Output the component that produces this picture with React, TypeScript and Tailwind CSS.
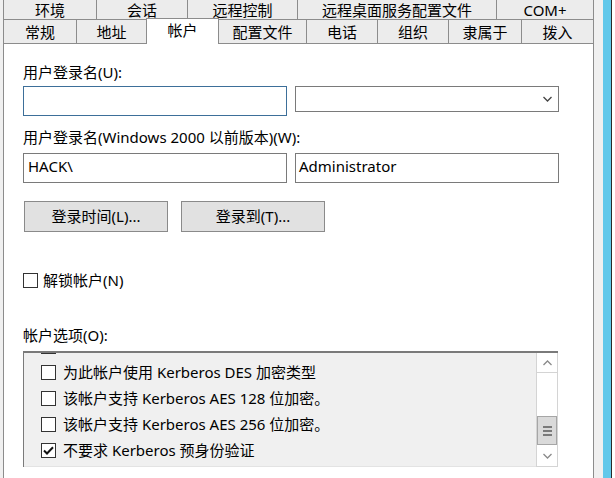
import React from 'react';

const topTabs = [
  { label: '环境', w: 93 },
  { label: '会话', w: 91 },
  { label: '远程控制', w: 110 },
  { label: '远程桌面服务配置文件', w: 199 },
  { label: 'COM+', w: 98 },
];

const bottomTabs = [
  { label: '常规', w: 73 },
  { label: '地址', w: 70 },
  { label: '帐户', w: 73, active: true },
  { label: '配置文件', w: 87 },
  { label: '电话', w: 71 },
  { label: '组织', w: 71 },
  { label: '隶属于', w: 73 },
  { label: '拨入', w: 73 },
];

// first row is scrolled mostly out of view, only its box edge shows
const options = [
  { label: '', checked: false },
  { label: '为此帐户使用 Kerberos DES 加密类型', checked: false },
  { label: '该帐户支持 Kerberos AES 128 位加密。', checked: false },
  { label: '该帐户支持 Kerberos AES 256 位加密。', checked: false },
  { label: '不要求 Kerberos 预身份验证', checked: true },
];

function CheckBox({ checked }: { checked?: boolean }) {
  return (
    <span className="flex h-[15px] w-[15px] shrink-0 items-center justify-center border border-[#333333] bg-white">
      {checked && (
        <svg width="11" height="9" viewBox="0 0 11 9">
          <path d="M1 4.5 L4 7.5 L10 1.2" fill="none" stroke="#111" strokeWidth="2" />
        </svg>
      )}
    </span>
  );
}

function Chevron({ up, color }: { up?: boolean; color: string }) {
  return (
    <svg width="9" height="6" viewBox="0 0 9 6">
      <path d={up ? 'M0.5 5 L4.5 1 L8.5 5' : 'M0.5 1 L4.5 5 L8.5 1'} fill="none" stroke={color} strokeWidth="1.3" />
    </svg>
  );
}

export default function App() {
  return (
    <div className="flex h-[478px] w-[615px] overflow-hidden bg-[#f0f0f0] font-['Noto_Sans','Noto_Sans_CJK_SC',sans-serif] text-[15px] text-black">
      <div className="ml-[3px] flex w-[591px] flex-col">
        {/* tab rows */}
        <div className="flex h-[20px] border-b border-[#8c8c8c]">
          {topTabs.map((t, i) => (
            <div
              key={t.label}
              style={{ width: t.w }}
              className={`flex items-center justify-center border-l border-[#8c8c8c] bg-[#ececec] pt-[2px] leading-none ${i === topTabs.length - 1 ? 'border-r' : ''}`}
            >
              {t.label}
            </div>
          ))}
        </div>
        <div className="flex h-[24px] items-end">
          {bottomTabs.map((t, i) =>
            t.active ? (
              <div
                key={t.label}
                style={{ width: t.w }}
                className="relative z-10 flex h-[26px] items-center justify-center border-x border-t border-[#8c8c8c] bg-white pb-[3px] leading-none"
              >
                {t.label}
              </div>
            ) : (
              <div
                key={t.label}
                style={{ width: t.w }}
                className={`flex h-[24px] items-center justify-center border-b border-l border-[#8c8c8c] bg-[#ececec] pt-[1px] leading-none ${i === bottomTabs.length - 1 ? 'border-r' : ''} ${bottomTabs[i - 1]?.active ? 'border-l-0' : ''}`}
              >
                {t.label}
              </div>
            )
          )}
        </div>

        {/* panel */}
        <div className="flex flex-1 flex-col border-x border-[#8c8c8c] bg-white pl-[19px] leading-[20px]">
          <div className="mt-[18px]">用户登录名(U):</div>
          <div className="mt-[4px] flex items-start gap-[8px]">
            <div className="h-[30px] w-[264px] border border-[#3d6f99] bg-white" />
            <div className="flex h-[26px] w-[264px] items-center justify-end border border-[#7a7a7a] bg-white pr-[6px]">
              <Chevron color="#444" />
            </div>
          </div>

          <div className="mt-[11px]">用户登录名(Windows 2000 以前版本)(W):</div>
          <div className="mt-[6px] flex gap-[8px]">
            <div className="flex h-[30px] w-[264px] items-center border border-[#7a7a7a] pb-[4px] pl-[4px]">HACK\</div>
            <div className="flex h-[30px] w-[264px] items-center border border-[#7a7a7a] pb-[4px] pl-[3px]">Administrator</div>
          </div>

          <div className="ml-[1px] mt-[18px] flex gap-[13px]">
            <button className="h-[31px] w-[144px] border border-[#8a8a8a] bg-[#e1e1e1] leading-none">登录时间(L)...</button>
            <button className="h-[31px] w-[144px] border border-[#8a8a8a] bg-[#e1e1e1] leading-none">登录到(T)...</button>
          </div>

          <div className="mt-[41px] flex h-[15px] items-center gap-[5px]">
            <CheckBox />
            <span className="leading-none">解锁帐户(N)</span>
          </div>

          <div className="mt-[37px]">帐户选项(O):</div>
          <div className="mt-[6px] flex h-[116px] w-[535px] border-l border-t-2 border-[#7a7a7a] bg-[#f0f0f0]">
            <div className="flex-1 overflow-hidden border-b border-[#e3e3e3]">
              <div className="-mt-[20px] flex flex-col">
                {options.map((o, i) => (
                  <div key={i} className="flex h-[26px] items-center gap-[7px] pl-[17px]">
                    <CheckBox checked={o.checked} />
                    <span className="whitespace-nowrap leading-none">{o.label}</span>
                  </div>
                ))}
              </div>
            </div>
            <div className="flex w-[22px] flex-col border border-t-0 border-[#d4d4d4] bg-white">
              <div className="flex h-[20px] items-center justify-center border-b border-[#d4d4d4]">
                <Chevron up color="#8a8a8a" />
              </div>
              <div className="flex-1" />
              <div className="flex h-[29px] flex-col items-center justify-center gap-[2px] border border-[#a6a6a6] bg-[#dadada]">
                <span className="h-[2px] w-[9px] bg-[#7a7a7a]" />
                <span className="h-[2px] w-[9px] bg-[#7a7a7a]" />
                <span className="h-[2px] w-[9px] bg-[#7a7a7a]" />
              </div>
              <div className="flex h-[21px] items-center justify-center">
                <Chevron color="#8a8a8a" />
              </div>
            </div>
          </div>
        </div>
      </div>

      {/* window edge */}
      <div className="w-[9px] bg-[#f0f0f0]" />
      <div className="w-[8px] bg-[#62c8ea]" />
      <div className="w-[1px] bg-[#2a2a2a]" />
      <div className="flex-1 bg-white" />
    </div>
  );
}
